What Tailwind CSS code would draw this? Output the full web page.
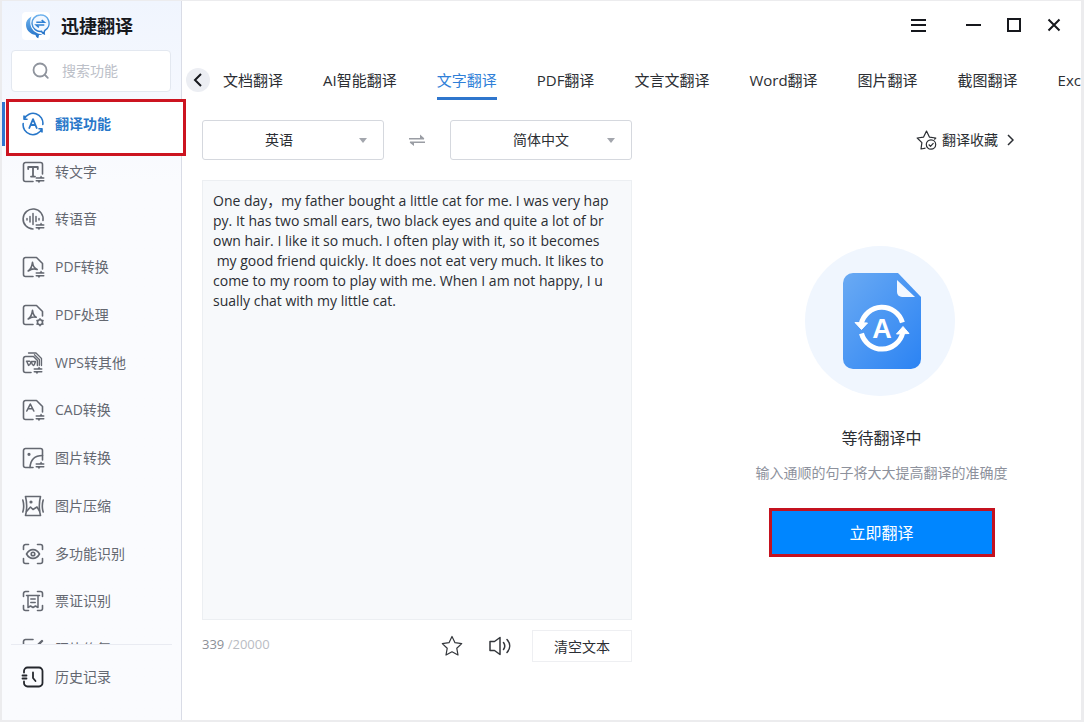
<!DOCTYPE html>
<html lang="zh-CN">

<head>
    <meta charset="UTF-8">
    <meta name="viewport" content="width=device-width, initial-scale=1.0">
    <title>迅捷翻译</title>
    <script src="https://cdn.jsdelivr.net/npm/@tailwindcss/browser@4"></script>
</head>

<body class="h-screen overflow-hidden flex bg-white border-t border-l-2 border-r-3 border-b-2 border-[#ececee] font-['Open_Sans','Noto_Sans_CJK_SC',sans-serif] text-[#2b2e33]">

    <!-- Shared icon parts -->
    <svg class="hidden">
        <symbol id="swap" viewBox="0 0 24 24">
            <path d="M15.200 18h7.600M15.200 20.700h7.600" stroke-width="1.400" />
            <path d="M18.500 18l1.500-2.500 1.800 2.500zM16.300 20.700l1.700 2.500 1.500-2.500z" fill="currentColor" stroke="none" />
        </symbol>
        <symbol id="corners" viewBox="0 0 24 24">
            <path d="M2.500 7.500v-3a2 2 0 0 1 2-2h3M16.500 2.500h3a2 2 0 0 1 2 2v3M21.500 16.500v3a2 2 0 0 1-2 2h-3M7.500 21.500h-3a2 2 0 0 1-2-2v-3" />
        </symbol>
    </svg>

    <!-- Sidebar -->
    <aside class="relative w-[180px] shrink-0 flex flex-col border-r border-[#d9dce6] bg-linear-to-b from-[#f0f5fe] to-[#fafbfe] to-25%">
        <div class="h-[49px] flex items-center pl-5 gap-[11px]">
            <svg class="size-7 shrink-0" viewBox="0 0 28 28" fill="none">
                <defs>
                    <linearGradient id="logo" x1="0" y1="0" x2="0" y2="1">
                        <stop offset="0" stop-color="#6fb3ee" />
                        <stop offset="1" stop-color="#1f6fc6" />
                    </linearGradient>
                </defs>
                <rect width="28" height="28" rx="4" fill="#fff" />
                <path d="M9.500 4.500C5.500 6.500 3.800 9.500 4 13c.2 4.500 3.300 8.200 7.500 9.500.8.300 1.500.4 2 .4.300 1.600 1.200 2.800 2.800 3.400l.7-3.300c1.500-.1 2.600-.5 3.600-1C12 22.500 5.500 14 9.500 4.500z" fill="url(#logo)" />
                <path d="M18 3a8.200 8.200 0 1 0 1.500 16.300c.5 1.400 1.300 2.200 2.700 2.600-.3-1.500 0-2.700 1-3.800A8.200 8.200 0 0 0 18 3z" fill="#f3f8ff" stroke="url(#logo)" stroke-width="1.500" />
                <path d="M14.300 10.300h8l-2.600-2.300M22.300 13h-8l2.600 2.300" stroke="#2f80d4" stroke-width="1.600" />
            </svg>
            <h1 class="text-lg font-bold text-[#16181d]">迅捷翻译</h1>
        </div>

        <label class="mx-[9px] h-[42px] mr-[10px] flex items-center gap-3 pl-5 bg-white border border-[#e3e8f0] rounded">
            <svg class="size-[18px] shrink-0" viewBox="0 0 18 18" fill="none" stroke="#8f949d" stroke-width="1.800" stroke-linecap="round">
                <circle cx="8" cy="8" r="6.500" />
                <path d="M13 13l2.800 2.800" />
            </svg>
            <input type="text" placeholder="搜索功能" aria-label="搜索功能" class="w-full min-w-0 text-sm outline-none placeholder:text-[#bcc0c8]">
        </label>

        <!-- Highlight round the active entry -->
        <div class="absolute top-[98px] left-1 w-[180px] h-[57px] bg-white border-3 border-[#cc1420]"></div>
        <div class="absolute top-[101px] left-0 w-[3px] h-[44px] bg-[#2f74d0]"></div>

        <nav class="relative mt-2 flex-1 min-h-0 overflow-hidden">
            <ul class="h-[573px] grid grid-rows-12 text-sm text-[#646871]">
                <li>
                    <a href="#" class="h-full flex items-center gap-[10px] pl-[19px] font-bold text-[#2877c9]">
                        <svg class="size-6" viewBox="0 0 24 24" fill="none" stroke="currentColor" stroke-width="1.600" stroke-linecap="round" stroke-linejoin="round">
                            <path d="M3.200 7A9.800 9.800 0 0 1 21.800 12.500M20.800 17A9.800 9.800 0 0 1 2.200 11.500M3 4v3.300h3M21 20v-3.300h-3" />
                            <path d="M8.300 16l3.700-8.800 3.700 8.800M9.700 13h4.600" stroke-width="1.800" />
                        </svg>
                        翻译功能
                    </a>
                </li>
                <li>
                    <a href="#" class="h-full flex items-center gap-[10px] pl-[19px]">
                        <svg class="size-6" viewBox="0 0 24 24" fill="none" stroke="currentColor" stroke-width="1.600" stroke-linecap="round" stroke-linejoin="round">
                            <path d="M12 21.500H4.500a2 2 0 0 1-2-2v-15a2 2 0 0 1 2-2h15a2 2 0 0 1 2 2V14" />
                            <path d="M7.200 9V7h9.600v2M12 7v9.500M10 16.600h4" stroke-width="1.800" />
                            <use href="#swap" />
                        </svg>
                        转文字
                    </a>
                </li>
                <li>
                    <a href="#" class="h-full flex items-center gap-[10px] pl-[19px]">
                        <svg class="size-6" viewBox="0 0 24 24" fill="none" stroke="currentColor" stroke-width="1.600" stroke-linecap="round" stroke-linejoin="round">
                            <path d="M12 22A10 10 0 1 1 22 13.500" />
                            <path d="M6 11.500v1.500M9 9.500v5.500M12 6.500v11M15 9.500v5M18 11.500v1.500" stroke-width="1.500" />
                            <use href="#swap" />
                        </svg>
                        转语音
                    </a>
                </li>
                <li>
                    <a href="#" class="h-full flex items-center gap-[10px] pl-[19px]">
                        <svg class="size-6" viewBox="0 0 24 24" fill="none" stroke="currentColor" stroke-width="1.600" stroke-linecap="round" stroke-linejoin="round">
                            <path d="M12 21.500H4.500a2 2 0 0 1-2-2v-15a2 2 0 0 1 2-2h11l6 6V14" />
                            <path d="M11.500 7.300c-.5 4-2 7-4.300 8.700 2.800-2 6-2.600 9-1.500-2.800-1.200-4.300-4-4.700-7.200z" />
                            <use href="#swap" />
                        </svg>
                        PDF转换
                    </a>
                </li>
                <li>
                    <a href="#" class="h-full flex items-center gap-[10px] pl-[19px]">
                        <svg class="size-6" viewBox="0 0 24 24" fill="none" stroke="currentColor" stroke-width="1.600" stroke-linecap="round" stroke-linejoin="round">
                            <path d="M12 21.500H4.500a2 2 0 0 1-2-2v-15a2 2 0 0 1 2-2h11l6 6V13" />
                            <path d="M11.500 7.300c-.5 4-2 7-4.300 8.700 2.800-2 5-2.600 8-1.700-2.300-1.200-3.300-4-3.700-7z" />
                            <circle cx="19" cy="19.300" r="2.500" />
                            <path d="M19 15.800v.5M19 22.300v.5M16 17.500l.4.300M21.600 20.800l.4.300M16 21.100l.4-.3M21.600 17.800l.4-.3" />
                        </svg>
                        PDF处理
                    </a>
                </li>
                <li>
                    <a href="#" class="h-full flex items-center gap-[10px] pl-[19px]">
                        <svg class="size-6" viewBox="0 0 24 24" fill="none" stroke="currentColor" stroke-width="1.600" stroke-linecap="round" stroke-linejoin="round">
                            <path d="M10 21.500H4.500a2 2 0 0 1-2-2V7.500a2 2 0 0 1 2-2H12.500l4 4V14.500" />
                            <path d="M7.500 2h7.500l5.500 5.500v7M13.500 3.800l5 5v5.500" stroke-width="1.300" />
                            <path d="M5.500 10.200h3M5.800 10.500l1.800 4c1.500 0 2-3 2.600-4 .6 1 .8 4 2.200 4 1.200-.5 1.600-2.500 2-4h-3" stroke-width="1.500" />
                            <g transform="translate(-2)">
                                <use href="#swap" />
                            </g>
                        </svg>
                        WPS转其他
                    </a>
                </li>
                <li>
                    <a href="#" class="h-full flex items-center gap-[10px] pl-[19px]">
                        <svg class="size-6" viewBox="0 0 24 24" fill="none" stroke="currentColor" stroke-width="1.600" stroke-linecap="round" stroke-linejoin="round">
                            <path d="M12 21.500H4.500a2 2 0 0 1-2-2v-15a2 2 0 0 1 2-2h11l6 6V14" />
                            <path d="M5.800 13l3.500-7 3.500 7M7 10.800h4.600" />
                            <use href="#swap" />
                        </svg>
                        CAD转换
                    </a>
                </li>
                <li>
                    <a href="#" class="h-full flex items-center gap-[10px] pl-[19px]">
                        <svg class="size-6" viewBox="0 0 24 24" fill="none" stroke="currentColor" stroke-width="1.600" stroke-linecap="round" stroke-linejoin="round">
                            <path d="M12 21.500H4.500a2 2 0 0 1-2-2v-15a2 2 0 0 1 2-2h15a2 2 0 0 1 2 2V14" />
                            <path d="M9 21.500C9.500 14 14 9.500 21.500 9.500" />
                            <circle cx="8" cy="8.300" r=".8" fill="currentColor" />
                            <use href="#swap" />
                        </svg>
                        图片转换
                    </a>
                </li>
                <li>
                    <a href="#" class="h-full flex items-center gap-[10px] pl-[19px]">
                        <svg class="size-6" viewBox="0 0 24 24" fill="none" stroke="currentColor" stroke-width="1.600" stroke-linecap="round" stroke-linejoin="round">
                            <path d="M4.500 2.500h15c-1.500 6-1.500 13 0 19h-15c1.500-6 1.500-13 0-19zM1.800 6c1.200 4 1.200 8 0 12M22.200 6c-1.200 4-1.200 8 0 12" />
                            <path d="M5.500 17.500l4-4.500 2.500 2.500 4-2.500 2.500 4" />
                            <circle cx="10" cy="8" r=".8" fill="currentColor" />
                        </svg>
                        图片压缩
                    </a>
                </li>
                <li>
                    <a href="#" class="h-full flex items-center gap-[10px] pl-[19px]">
                        <svg class="size-6" viewBox="0 0 24 24" fill="none" stroke="currentColor" stroke-width="1.600" stroke-linecap="round" stroke-linejoin="round">
                            <use href="#corners" />
                            <path d="M5.500 12c3.200-5.800 9.800-5.800 13 0-3.200 5.800-9.800 5.800-13 0z" />
                            <circle cx="12" cy="12" r="1.800" />
                        </svg>
                        多功能识别
                    </a>
                </li>
                <li>
                    <a href="#" class="h-full flex items-center gap-[10px] pl-[19px]">
                        <svg class="size-6" viewBox="0 0 24 24" fill="none" stroke="currentColor" stroke-width="1.600" stroke-linecap="round" stroke-linejoin="round">
                            <use href="#corners" />
                            <path d="M7 6.500h10v12l-2.500-1.500-2.500 1.500-2.500-1.500L7 18.500zM5.500 6.500h13M9.800 10h4.400M9.800 13.500h4.400" stroke-width="1.500" />
                        </svg>
                        票证识别
                    </a>
                </li>
                <li>
                    <a href="#" class="h-full flex items-center gap-[10px] pl-[19px]">
                        <svg class="size-6" viewBox="0 0 24 24" fill="none" stroke="currentColor" stroke-width="1.600" stroke-linecap="round" stroke-linejoin="round">
                            <path d="M12 2.500H4.500a2 2 0 0 0-2 2v15a2 2 0 0 0 2 2h15a2 2 0 0 0 2-2V11" />
                            <path d="M21 4l-8 8" stroke-width="2.400" />
                        </svg>
                        照片修复
                    </a>
                </li>
            </ul>
        </nav>

        <div class="mx-[9px] h-[76px] border-t border-[#e9ebf2]">
            <a href="#" class="h-16 flex items-center gap-[10px] pl-[10px] text-sm text-[#646871]">
                <svg class="size-6" viewBox="0 0 24 24" fill="none" stroke="#24272d" stroke-width="1.800" stroke-linecap="round" stroke-linejoin="round">
                    <path d="M3 7.500V6a3.500 3.500 0 0 1 3.500-3.500h11.500A3.500 3.500 0 0 1 21.500 6v12a3.500 3.500 0 0 1-3.500 3.500H6.500A3.500 3.500 0 0 1 3 18v-1.500M1.500 10.500h4M1.500 13.500h4M12 7.500v5.500l2.500 3" />
                </svg>
                历史记录
            </a>
        </div>
    </aside>

    <!-- Main -->
    <main class="flex-1 min-w-0 flex flex-col">
        <header class="h-12 flex items-center justify-end pr-[19px] text-[#16181d]">
            <button type="button" aria-label="菜单" class="mr-10">
                <svg class="size-4" viewBox="0 0 16 16" stroke="currentColor" stroke-width="2">
                    <path d="M1 3h15M1 8h15M1 14h15" />
                </svg>
            </button>
            <div class="flex gap-6">
                <button type="button" aria-label="最小化">
                    <svg class="size-4" viewBox="0 0 16 16" stroke="currentColor" stroke-width="2">
                        <path d="M0 8h15" />
                    </svg>
                </button>
                <button type="button" aria-label="最大化">
                    <svg class="size-4" viewBox="0 0 16 16" fill="none" stroke="currentColor" stroke-width="2">
                        <path d="M2 2h12v12H2z" />
                    </svg>
                </button>
                <button type="button" aria-label="关闭">
                    <svg class="size-4" viewBox="0 0 16 16" stroke="currentColor" stroke-width="2">
                        <path d="M2.500 2.500l11 11M13.500 2.500l-11 11" />
                    </svg>
                </button>
            </div>
        </header>

        <div class="h-[51px] pt-[11px] flex items-start gap-[13px] pl-1">
            <button type="button" aria-label="上一页" class="mt-2 size-6 shrink-0 rounded-full bg-[#eceef3] flex items-center justify-center">
                <svg class="size-4" viewBox="0 0 16 16" fill="none" stroke="#16181d" stroke-width="2">
                    <path d="M11 2L5 8l6 6" />
                </svg>
            </button>
            <div class="min-w-0 flex-1 flex gap-10 overflow-hidden whitespace-nowrap text-[15px] leading-[40px]">
                <a href="#">文档翻译</a>
                <a href="#">AI智能翻译</a>
                <a href="#" class="h-10 border-b-3 border-[#2f76cd] text-[#2f7fd8]">文字翻译</a>
                <a href="#">PDF翻译</a>
                <a href="#">文言文翻译</a>
                <a href="#">Word翻译</a>
                <a href="#">图片翻译</a>
                <a href="#">截图翻译</a>
                <a href="#">Excel翻译</a>
            </div>
        </div>

        <div class="flex-1 flex gap-[50px] pt-5 pl-5">
            <section class="w-[430px] shrink-0">
                <div class="flex items-center justify-between">
                    <div class="relative w-[182px]">
                        <select aria-label="源语言" class="w-full h-10 pr-7 appearance-none border border-[#d5d8de] rounded-[3px] bg-white text-sm [text-align-last:center]">
                            <option>英语</option>
                        </select>
                        <svg class="absolute right-[17px] top-[18px] w-2 h-[5px] pointer-events-none" viewBox="0 0 8 5" fill="#a3a6ad">
                            <path d="M0 0h8L4 5z" />
                        </svg>
                    </div>
                    <button type="button" aria-label="互换语言">
                        <svg class="w-4 h-3" viewBox="0 0 16 12" fill="none" stroke="#9a9da4" stroke-width="1.500">
                            <path d="M0 4.700h15M16 8.300H1" />
                            <path d="M11 4.500V.5l4.500 4zM5 8.500v3.500L.5 8.500z" fill="#9a9da4" stroke="none" />
                        </svg>
                    </button>
                    <div class="relative w-[182px]">
                        <select aria-label="目标语言" class="w-full h-10 pr-0 appearance-none border border-[#d5d8de] rounded-[3px] bg-white text-sm [text-align-last:center]">
                            <option>简体中文</option>
                        </select>
                        <svg class="absolute right-[17px] top-[18px] w-2 h-[5px] pointer-events-none" viewBox="0 0 8 5" fill="#a3a6ad">
                            <path d="M0 0h8L4 5z" />
                        </svg>
                    </div>
                </div>

                <textarea aria-label="原文" wrap="off" class="block mt-5 w-full h-[440px] px-[10px] py-[10px] border border-[#eceff2] bg-[#f7f9fb] text-sm leading-5 resize-none overflow-hidden outline-none">One day，my father bought a little cat for me. I was very hap
py. It has two small ears, two black eyes and quite a lot of br
own hair. I like it so much. I often play with it, so it becomes
 my good friend quickly. It does not eat very much. It likes to
come to my room to play with me. When I am not happy, I u
sually chat with my little cat.</textarea>

                <div class="mt-[10px] flex items-center">
                    <p class="flex-1 pb-[2px] text-[13px] text-[#b9bcc3]"><span class="text-[#8c9097]">339</span> /20000</p>
                    <button type="button" aria-label="收藏" class="mr-6">
                        <svg class="size-6" viewBox="0 0 24 24" fill="none" stroke="#33363b" stroke-width="1.200" stroke-linejoin="round">
                            <path d="M12 2.500l3 6.200 6.700.9-4.900 4.700 1.200 6.700-6-3.200-6 3.200 1.200-6.700L2.300 9.600l6.700-.9z" />
                        </svg>
                    </button>
                    <button type="button" aria-label="朗读" class="mr-5">
                        <svg class="size-6" viewBox="0 0 24 24" fill="none" stroke="#33363b" stroke-width="1.500" stroke-linecap="round" stroke-linejoin="round">
                            <path d="M2 7.500h4.500L12 3.500v17l-5.500-4H2zM15.500 8.500c1.600 2.200 1.600 4.800 0 7M19 5.500c3.600 4 3.600 9 0 13" />
                        </svg>
                    </button>
                    <button type="button" class="w-[100px] h-8 pt-px border border-[#eeeff2] text-sm">清空文本</button>
                </div>
            </section>

            <section class="flex-1 flex flex-col items-center">
                <div class="w-full flex justify-end pr-[67px]">
                    <a href="#" class="h-10 flex items-center gap-1 text-sm">
                        <svg class="size-[22px]" viewBox="0 0 22 22" fill="none" stroke="#2b2e33" stroke-width="1.200" stroke-linejoin="round">
                            <path d="M9.500 19.200L5 20l.9-6.400L1.200 9l6.400-.9L10.500 2l2.900 6.100 6.400.9-1.500 1.500" />
                            <circle cx="15" cy="15.500" r="4.700" />
                            <path d="M12.700 15.500l1.800 1.800 3-3.200" />
                        </svg>
                        翻译收藏
                        <svg class="w-[7px] h-3 ml-[5px]" viewBox="0 0 7 12" fill="none" stroke="#2b2e33" stroke-width="1.500">
                            <path d="M1 1l5 5-5 5" />
                        </svg>
                    </a>
                </div>

                <svg class="mt-[86px] mr-1 size-[150px]" viewBox="0 0 150 150" fill="none">
                    <defs>
                        <linearGradient id="doc" x1="0" y1="0" x2="1" y2="1">
                            <stop offset="0" stop-color="#6aaaf3" />
                            <stop offset="1" stop-color="#2b83f3" />
                        </linearGradient>
                    </defs>
                    <circle cx="75" cy="75" r="75" fill="#f0f6fe" />
                    <path d="M48 27h45l23 24v62a10 10 0 0 1-10 10H48a10 10 0 0 1-10-10V37a10 10 0 0 1 10-10z" fill="url(#doc)" />
                    <path d="M92 34l18 17H97a5 5 0 0 1-5-5z" fill="#f3f8ff" />
                    <path d="M56.200 78A21.300 21.300 0 0 1 97.400 76.500M97.800 86.500A21.300 21.300 0 0 1 56.500 87.500" stroke="#fff" stroke-width="5" />
                    <path d="M50 76.500l12.500.5-6 6.500zM91.500 88l6.500-7.500 6 7z" fill="#fff" stroke="#fff" stroke-linejoin="round" />
                    <text x="77" y="92" text-anchor="middle" font-family="Liberation Sans, sans-serif" font-weight="700" font-size="27" fill="#fff">A</text>
                </svg>

                <h2 class="mt-[30px] text-base leading-6">等待翻译中</h2>
                <p class="mt-[13px] text-sm leading-5 text-[#8d919c]">输入通顺的句子将大大提高翻译的准确度</p>
                <button type="button" class="mt-[25px] w-[226px] h-[49px] bg-[#0086ff] border-3 border-[#c4121f] text-base text-white">立即翻译</button>
            </section>
        </div>
    </main>

</body>

</html>
